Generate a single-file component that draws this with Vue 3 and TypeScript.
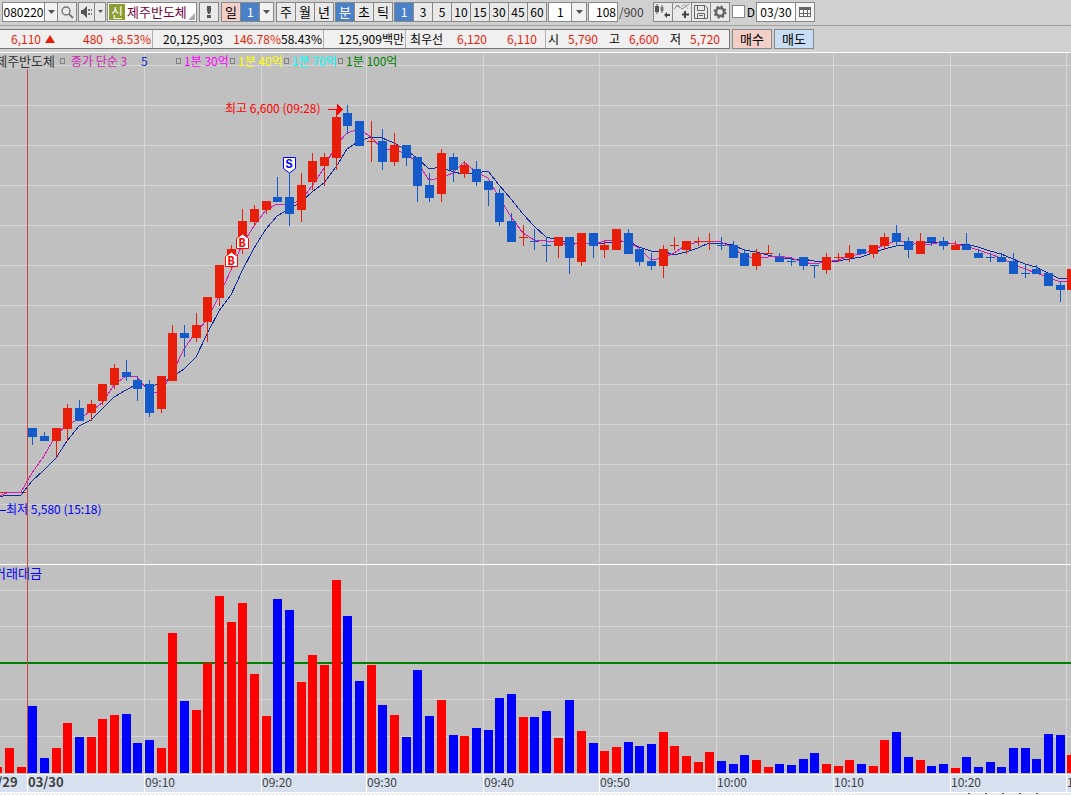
<script setup lang="ts">
import { ref } from 'vue'

type Candle = [up: number, top: number, bottom: number, high: number, low: number, volumeTop: number]

const stockCode = ref('080220')
const barCount = ref('108')
const chartDate = ref('03/30')
const dayMode = ref(false)
const dayStep = ref('1')
const customStep = ref('1')
const activeUnit = ref('분')
const activeMinute = ref('1')

const periods = ['주', '월', '년']
const units = ['분', '초', '틱']
const minutes = ['1', '3', '5', '10', '15', '30', '45', '60']
const legends = [
  { text: '1분 30억', tone: 'pink' },
  { text: '1분 40억', tone: 'yellow' },
  { text: '1분 70억', tone: 'cyan' },
  { text: '1분 100억', tone: 'green' },
]

const candles: Candle[] = [
  [0, 428, 437, 428, 445, 706], [0, 436, 441, 432, 441, 758], [1, 428, 441, 428, 457, 748],
  [1, 408, 429, 404, 441, 723], [0, 408, 421, 400, 421, 737], [1, 404, 413, 400, 421, 737],
  [1, 384, 401, 384, 405, 719], [1, 368, 385, 364, 389, 715], [0, 372, 377, 360, 381, 714],
  [0, 380, 389, 376, 401, 743], [0, 384, 413, 380, 417, 740], [1, 376, 409, 376, 413, 748],
  [1, 333, 381, 325, 381, 633], [0, 333, 338, 325, 357, 701], [1, 325, 338, 313, 342, 710],
  [1, 297, 322, 297, 342, 663], [1, 265, 298, 265, 306, 596], [1, 249, 266, 245, 270, 622],
  [1, 221, 238, 209, 254, 603], [1, 209, 222, 205, 226, 674], [1, 201, 210, 201, 214, 716],
  [0, 197, 202, 177, 202, 599], [0, 197, 214, 173, 226, 610], [1, 185, 210, 173, 222, 682],
  [1, 161, 182, 153, 190, 655], [1, 157, 166, 153, 186, 665], [1, 117, 158, 110, 170, 580],
  [0, 113, 126, 105, 134, 616], [0, 121, 146, 121, 146, 681], [1, 141, 142, 121, 162, 665],
  [0, 141, 162, 129, 170, 705], [1, 145, 162, 133, 166, 715], [0, 145, 158, 145, 166, 737],
  [0, 157, 186, 157, 202, 670], [0, 185, 198, 173, 202, 716], [1, 153, 194, 149, 202, 700],
  [0, 157, 170, 153, 182, 735], [1, 165, 174, 161, 178, 736], [0, 169, 182, 161, 186, 728],
  [0, 181, 190, 181, 206, 730], [0, 193, 222, 189, 226, 698], [0, 221, 242, 213, 242, 694],
  [1, 237, 238, 225, 246, 717], [0, 241, 242, 229, 250, 717], [0, 245, 246, 237, 262, 711],
  [1, 237, 246, 237, 258, 738], [0, 237, 258, 237, 274, 700], [1, 233, 262, 233, 266, 731],
  [0, 233, 246, 233, 258, 743], [1, 245, 250, 241, 258, 751], [1, 229, 250, 229, 250, 747],
  [0, 233, 254, 229, 254, 742], [0, 249, 262, 249, 266, 746], [0, 261, 266, 253, 270, 744],
  [1, 249, 266, 245, 278, 732], [1, 245, 246, 237, 250, 746], [1, 241, 250, 241, 254, 756],
  [1, 241, 242, 237, 246, 762], [1, 241, 242, 233, 250, 752], [0, 245, 246, 237, 250, 761],
  [0, 245, 258, 241, 258, 764], [0, 253, 266, 249, 266, 755], [1, 253, 266, 249, 270, 760],
  [1, 253, 254, 245, 254, 767], [0, 257, 262, 253, 262, 764], [0, 261, 262, 257, 266, 765],
  [0, 257, 266, 257, 270, 759], [0, 265, 266, 265, 278, 753], [1, 257, 270, 253, 274, 764],
  [1, 257, 258, 253, 262, 766], [1, 253, 258, 245, 262, 760], [0, 249, 254, 249, 254, 764],
  [1, 245, 254, 245, 258, 766], [1, 237, 246, 233, 250, 740], [0, 233, 242, 225, 246, 732],
  [0, 241, 250, 237, 258, 757], [1, 241, 254, 233, 254, 760], [0, 237, 242, 237, 246, 766],
  [0, 241, 246, 237, 250, 764], [1, 245, 250, 241, 250, 768], [0, 245, 250, 233, 250, 757],
  [0, 253, 258, 249, 258, 767], [0, 257, 258, 253, 262, 762], [0, 257, 262, 253, 262, 767],
  [0, 261, 274, 253, 274, 748], [0, 273, 274, 265, 278, 748], [0, 269, 274, 265, 274, 759],
  [0, 273, 286, 273, 286, 734], [0, 285, 290, 281, 302, 735], [1, 269, 290, 269, 290, 755],
]

const previousVolumes = [{ slot: -3, top: 767 }, { slot: -2, top: 748 }, { slot: -1, top: 767 }]
const previousCloses = [500, 492, 508, 492, 492, 492, 492]

const slotX = (slot: number): number => Math.floor(28.71 + 11.675 * slot)

const closes = [...previousCloses, ...candles.map(c => (c[0] ? c[1] : c[2] - 1))]

function movingAverage(span: number): string {
  const points: string[] = []
  for (let i = 4; i < closes.length; i++) {
    const slice = closes.slice(i - span + 1, i + 1)
    const mean = slice.reduce((sum, v) => sum + v, 0) / span
    points.push(`${slotX(i - previousCloses.length) + 4},${Math.round(mean)}`)
  }
  return points.join(' ')
}

const shortAverage = movingAverage(3)
const longAverage = movingAverage(5)

const priceGrid = [65, 105, 145, 185, 225, 265, 305, 345, 384, 424, 464, 504, 544]
const volumeGrid = [590, 626, 699, 736, 772]
const times = [
  { x: 144, label: '09:10' }, { x: 261, label: '09:20' }, { x: 366, label: '09:30' },
  { x: 483, label: '09:40' }, { x: 599, label: '09:50' }, { x: 716, label: '10:00' },
  { x: 833, label: '10:10' }, { x: 950, label: '10:20' }, { x: 1066, label: '10:30' },
]
</script>

<template>
  <main class="app">
    <header class="toolbar">
      <div class="group">
        <input v-model="stockCode" class="field code" aria-label="종목코드" />
        <button class="cell arrow" aria-label="종목 목록"><svg width="7" height="4"><path d="M0 0H7L3.500 4Z" /></svg></button>
        <button class="cell" aria-label="검색">
          <svg width="14" height="14" fill="none" stroke="#777"><circle cx="6" cy="6" r="4" stroke-width="1.500" /><path d="M9 9L13 13" stroke-width="2" /></svg>
        </button>
      </div>
      <div class="group">
        <button class="cell sound" aria-label="소리">
          <svg width="14" height="12"><path d="M1 4H3L7 0V12L3 8H1Z" fill="#555" /><path d="M8 3h2v2h-2zM11 3h1v2h-1zM8 7h2v2h-2zM11 7h1v2h-1z" fill="#777" /></svg>
        </button>
        <button class="cell tiny" aria-label="소리 설정"><svg width="5" height="3"><path d="M0 0H5L2.500 3Z" /></svg></button>
      </div>
      <div class="group name">
        <span class="badge">신</span><span>제주반도체</span>
        <svg class="corner" width="7" height="7"><path d="M7 0V7H0Z" fill="#aaa" /></svg>
      </div>
      <div class="group spaced">
        <button class="cell alert" aria-label="알림"><svg width="4" height="12"><path d="M0 0H4V5L3 8H1L0 5ZM0 9H4V12H0Z" fill="#555" /></svg></button>
      </div>
      <div class="group spaced">
        <button class="cell rose hangul">일</button>
        <div class="picker day">
          <select v-model="dayStep" aria-label="일 간격"><option>1</option><option>3</option></select>
          <span class="cell arrow"><svg width="7" height="4"><path d="M0 0H7L3.500 4Z" /></svg></span>
        </div>
      </div>
      <div class="group spaced">
        <button v-for="p in periods" :key="p" class="cell hangul" :class="{ on: activeUnit === p }" @click="activeUnit = p">{{ p }}</button>
      </div>
      <div class="group">
        <button v-for="u in units" :key="u" class="cell hangul" :class="{ on: activeUnit === u }" @click="activeUnit = u">{{ u }}</button>
      </div>
      <div class="group">
        <button v-for="m in minutes" :key="m" class="cell" :class="{ on: activeMinute === m }" @click="activeMinute = m">{{ m }}</button>
      </div>
      <div class="group">
        <div class="picker">
          <select v-model="customStep" aria-label="분 간격"><option>1</option><option>2</option></select>
          <span class="cell arrow"><svg width="7" height="4"><path d="M0 0H7L3.500 4Z" /></svg></span>
        </div>
      </div>
      <div class="group"><input v-model="barCount" class="field count" aria-label="표시 봉 수" /></div>
      <span class="total">/900</span>
      <div class="group">
        <button class="cell" aria-label="봉 추가">
          <svg width="16" height="15"><path d="M2 0V10M7 1V9" stroke="#555" /><path d="M0 2h4v6h-4z" fill="#555" /><path d="M5.500 3h3v4h-3z" fill="#777" /><path d="M9 11L12 8V10H15V12H12V14Z" fill="#444" /></svg>
        </button>
        <button class="cell" aria-label="지표 추가">
          <svg width="16" height="15" fill="none"><path d="M0 5L4 1L8 5L12 2L15 0" stroke="#888" /><path d="M2 1L6 4L10 0L14 5" stroke="#aaa" /><path d="M11 7V14M8 10.500H15" stroke="#444" stroke-width="2" /></svg>
        </button>
        <button class="cell" aria-label="저장">
          <svg width="14" height="14" fill="none" stroke="#666"><path d="M.5.500H11L13.500 3V13.500H.500ZM3.500 1V5.500H10.500V1M3.500 13V8.500H10.500V13M5 10.500H9" /></svg>
        </button>
        <button class="cell" aria-label="설정">
          <svg width="14" height="14" fill="none" stroke="#666"><circle cx="7" cy="7" r="4" stroke-width="2.500" /><circle cx="7" cy="7" r="5.500" stroke-width="2" stroke-dasharray="2.200 2.120" /></svg>
        </button>
      </div>
      <label class="day-mode"><input v-model="dayMode" type="checkbox" />D</label>
      <div class="group">
        <input v-model="chartDate" class="field date" aria-label="날짜" />
        <button class="cell calendar" aria-label="달력">
          <svg width="12" height="11"><path d="M0 1H12V11H0Z" fill="#666" /><path d="M1 4h3v3h-3zM5 4h3v3h-3zM9 4h2v3h-2zM1 8h3v2h-3zM5 8h3v2h-3zM9 8h2v2h-2z" fill="#fff" /></svg>
        </button>
      </div>
    </header>

    <section class="quote-row">
      <div class="quote">
        <div class="part price">
          <span class="up">6,110</span>
          <svg width="10" height="8" aria-label="상승"><path d="M5 0L10 8H0Z" fill="#e61e0a" /></svg>
          <span class="up">480</span><span class="up">+8.53%</span>
        </div>
        <div class="part volume"><span>20,125,903</span><span class="up">146.78%</span><span>58.43%</span></div>
        <div class="part amount"><span>125,909백만</span></div>
        <div class="part best"><span>최우선</span><span class="up">6,120</span><span class="up">6,110</span></div>
        <div class="part range">
          <span>시</span><span class="up">5,790</span><span>고</span><span class="up">6,600</span><span>저</span><span class="up">5,720</span>
        </div>
      </div>
      <button class="order buy">매수</button>
      <button class="order sell">매도</button>
    </section>

    <section class="chart">
      <svg class="plot" width="100%" height="742" role="img" aria-label="제주반도체 1분 차트">
        <defs>
          <pattern id="dots" width="4" height="2" patternUnits="userSpaceOnUse"><rect width="4" height="2" fill="#fff" /><rect width="2" height="1" fill="#e4e4e4" /><rect x="2" y="1" width="2" height="1" fill="#e4e4e4" /></pattern>
        </defs>
        <g transform="translate(0 -53)" shape-rendering="crispEdges">
          <g fill="#d6d6d6">
            <rect v-for="y in priceGrid" :key="y" x="0" :y="y" width="100%" height="1" />
            <rect v-for="y in volumeGrid" :key="y" x="0" :y="y" width="100%" height="1" />
            <rect v-for="t in times" :key="t.x" :x="t.x" y="53" width="1" height="721" />
          </g>
          <rect x="0" y="564" width="100%" height="1" fill="#fff" />
          <rect x="0" y="662" width="100%" height="2" fill="#008000" />

          <path d="M0 492.500H26" stroke="#e61e0a" />
          <polyline :points="longAverage" class="line long" />
          <polyline :points="shortAverage" class="line short" />
          <g v-for="(c, i) in candles" :key="i" :class="c[0] ? 'rise' : 'fall'">
            <rect :x="slotX(i) + 4" :y="c[3]" width="1" :height="c[4] - c[3]" />
            <rect :x="slotX(i)" :y="c[1]" width="9" :height="c[2] - c[1]" />
          </g>

          <g fill="#f00">
            <rect v-for="v in previousVolumes" :key="v.slot" :x="slotX(v.slot)" :y="v.top" width="9" :height="773 - v.top" />
          </g>
          <rect v-for="(c, i) in candles" :key="i" :x="slotX(i)" :y="c[5]" width="9" :height="773 - c[5]" :fill="c[0] ? '#f00' : '#00f'" />

          <text x="225" y="113" fill="#f00">최고 6,600 (09:28)</text>
          <path d="M328 109.500H338" stroke="#f00" />
          <path d="M337 104L343 109.500L337 115Z" fill="#f00" />
          <text x="6" y="514" fill="#00f">최저 5,580 (15:18)</text>
          <path d="M0 510.500H6" stroke="#00f" />
          <text x="-6" y="578" fill="#00f" class="hangul">거래대금</text>
          <rect x="27" y="53" width="1" height="721" fill="#c84646" />

          <g fill="#fff" shape-rendering="auto" class="markers">
            <path d="M283.500 157.500H295.500V168.500L289.500 173L283.500 168.500Z" stroke="#00f" />
            <text x="289" y="168" fill="#00f">S</text>
            <path d="M225.500 266.500H237.500V256.500L231.500 252L225.500 256.500Z" stroke="#f00" />
            <text x="231" y="265" fill="#f00">B</text>
            <path d="M236.500 248.500H248.500V238.500L242.500 234L236.500 238.500Z" stroke="#f00" />
            <text x="242" y="247" fill="#f00">B</text>
          </g>

          <rect x="0" y="774" width="100%" height="19" fill="#fff" />
          <rect x="0" y="775" width="100%" height="17" fill="#d6e0ee" />
          <g fill="#fff">
            <rect x="27" y="775" width="1" height="17" />
            <rect v-for="t in times" :key="t.x" :x="t.x" y="775" width="1" height="17" />
          </g>
          <g fill="#404040">
            <text x="-18" y="787" class="bold">03/29</text>
            <text x="28" y="787" class="bold">03/30</text>
            <text v-for="t in times" :key="t.x" :x="t.x + 1" y="787">{{ t.label }}</text>
          </g>
          <rect x="0" y="793" width="100%" height="2" fill="url(#dots)" />
          <rect x="853" y="793" width="100%" height="2" fill="#ececec" />
          <path d="M968 793.500h2M985 793.500h2M1002 793.500h2M1019 793.500h2M1036 793.500h2" stroke="#555" />
        </g>
      </svg>
      <div class="legend">
        <span class="stock hangul"><span>제주반도체</span></span>
        <i></i><span class="average">종가 단순 3</span><span class="navy">5</span>
        <span v-for="l in legends" :key="l.text" class="entry" :class="l.tone"><i></i>{{ l.text }}</span>
      </div>
    </section>
  </main>
</template>

<style>
body { margin: 0; background: #d0d0d0; }
</style>

<style scoped>
.app, button, input, select {
  font-family: "Noto Sans CJK KR", sans-serif;
  font-size: 12px;
  line-height: 16px;
  color: #000;
}
.app { min-height: 100vh; overflow: hidden; background: #d0d0d0; }
button, input, select { box-sizing: border-box; margin: 0; padding: 0; border: 0; border-radius: 0; }

.toolbar {
  display: flex;
  align-items: center;
  gap: 1px;
  box-sizing: border-box;
  height: 26px;
  padding: 0 0 2px 2px;
  border-bottom: 1px solid #a0a0a0;
  white-space: nowrap;
}
.group { display: flex; flex: none; gap: 1px; box-sizing: border-box; height: 20px; padding: 1px; background: #888; }
.spaced { margin-left: 1px; }
.cell { display: flex; align-items: center; justify-content: center; width: 18px; height: 18px; background: #e9e9e9; }
.cell svg { flex: none; }
.cell.arrow { width: 12px; background: #f2f2f2; }
.cell.arrow svg, .cell.tiny svg { fill: #555; }
.cell.tiny { width: 10px; }
.cell.sound { width: 15px; }
.cell.rose { background: #f4cfc8; }
.cell.on { background: #4a80c8; color: #fff; }
.cell.calendar { background: #f4f4f4; }
.hangul, .cell.hangul, .plot .hangul { font-size: 13px; }
.field { height: 18px; background: #fff; text-align: center; outline: 0; }
.code { width: 41px; }
.count { width: 28px; padding-right: 1px; text-align: right; }
.date { width: 38px; }
.name { position: relative; align-items: center; gap: 2px; width: 90px; background: #fff; border: 1px solid #888; padding: 0 1px; color: #78003c; font-size: 13px; }
.badge { width: 16px; height: 16px; background: #8c9c30; color: #fff; text-align: center; }
.corner { position: absolute; right: 1px; bottom: 1px; }
.picker { display: flex; gap: 1px; position: relative; }
.picker select { appearance: none; width: 37px; height: 18px; padding-left: 8px; background: #fff; outline: 0; }
.picker .arrow { position: absolute; right: 0; top: 0; width: 14px; border-left: 1px solid #888; }
.picker .arrow { pointer-events: none; }
.picker.day select { width: 32px; padding-left: 6px; background: #4a80c8; color: #fff; }
.picker.day .arrow { width: 13px; }
.total { width: 33px; color: #444; }
.day-mode { display: flex; align-items: center; gap: 2px; width: 23px; padding-left: 1px; }
.day-mode input { appearance: none; width: 13px; height: 13px; border: 1px solid #888; background: #fff; }

.quote-row { display: flex; gap: 2px; padding: 3px 0; height: 20px; border-bottom: 1px solid #fff; white-space: nowrap; }
.quote { display: flex; box-sizing: border-box; width: 730px; border: 1px solid #777; border-left: 0; background: #f0f0f0; }
.part { display: grid; align-items: center; box-sizing: border-box; border-right: 1px solid #b0b0b0; text-align: right; }
.part:last-child { border-right: 0; }
.part svg { justify-self: end; }
.price { width: 153px; grid-template-columns: 41px 14px 48px 48px; }
.volume { width: 171px; grid-template-columns: 70px 58px 41px; }
.amount { width: 82px; grid-template-columns: 80px; }
.best { width: 140px; grid-template-columns: 37px 44px 50px; }
.range { grid-template-columns: 13px 39px 22px 39px 22px 39px; }
.up { color: #e61e0a; }
.order { width: 40px; height: 20px; border: 1px solid #888; font-size: 13px; }
.buy { background: #f4cfc8; }
.sell { background: #c8def4; }

.chart { position: relative; background: #c0c0c0; }
.plot { display: block; }
.plot text { font-size: 12px; }
.plot .bold { font-weight: bold; font-size: 13px; }
.plot .markers text { font-family: "Liberation Mono", monospace; font-weight: bold; font-size: 12px; text-anchor: middle; }
.line { fill: none; stroke-width: 1; }
.short { stroke: #d21eb4; }
.long { stroke: #1428a0; }
.rise { fill: #e61e0a; }
.fall { fill: #145ac8; }

.legend { position: absolute; top: 0; left: 0; display: flex; align-items: center; height: 16px; white-space: nowrap; }
.legend i { display: inline-block; flex: none; box-sizing: border-box; width: 5px; height: 6px; border: 1px solid #808080; }
.stock { display: flex; justify-content: flex-end; width: 55px; margin-right: 5px; overflow: hidden; background: #c8c8c8; color: #333; }
.average { width: 70px; margin-left: 6px; color: #d21eb4; }
.navy { width: 35px; color: #0028c8; }
.entry { display: flex; align-items: center; gap: 3px; width: 54px; }
.pink { color: #f0f; }
.yellow { color: #ff0; }
.cyan { color: #0ff; }
.green { color: #008000; }
</style>
